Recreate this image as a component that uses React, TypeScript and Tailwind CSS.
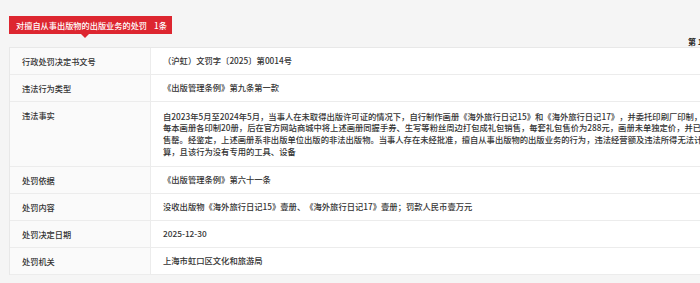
import React from "react";

const rows: { label: string; lines: string[] }[] = [
  { label: "行政处罚决定书文号", lines: ["（沪虹）文罚字〔2025〕第0014号"] },
  { label: "违法行为类型", lines: ["《出版管理条例》第九条第一款"] },
  {
    label: "违法事实",
    lines: [
      "自2023年5月至2024年5月，当事人在未取得出版许可证的情况下，自行制作画册《海外旅行日记15》和《海外旅行日记17》，并委托印刷厂印制，",
      "每本画册各印制20册，后在官方网站商城中将上述画册同握手券、生写等粉丝周边打包成礼包销售，每套礼包售价为288元，画册未单独定价，并已",
      "售罄。经鉴定，上述画册系非出版单位出版的非法出版物。当事人存在未经批准，擅自从事出版物的出版业务的行为，违法经营额及违法所得无法计",
      "算，且该行为没有专用的工具、设备",
    ],
  },
  { label: "处罚依据", lines: ["《出版管理条例》第六十一条"] },
  { label: "处罚内容", lines: ["没收出版物《海外旅行日记15》壹册、《海外旅行日记17》壹册；罚款人民币壹万元"] },
  { label: "处罚决定日期", lines: ["2025-12-30"] },
  { label: "处罚机关", lines: ["上海市虹口区文化和旅游局"] },
];

export default function App() {
  return (
    <div
      className="w-[700px] h-[283px] overflow-hidden bg-[#f5f5f5] text-[#333] font-medium [text-spacing-trim:space-all]"
      style={{ fontFamily: '"Noto Sans CJK SC", "Noto Sans", sans-serif' }}
    >
      <div className="w-[1000px] pl-[9px]">
        <div className="h-[47px] flex items-start">
          <div className="mt-[16px] relative">
            <div className="h-[18px] w-[163px] bg-[#dd2630] text-white text-[8.2px] leading-[18px] pl-[7px] whitespace-nowrap">
              对擅自从事出版物的出版业务的处罚<span className="ml-[7px]">1条</span>
            </div>
            <div className="absolute left-[72px] top-[18px] w-0 h-0 border-l-[4px] border-r-[4px] border-t-[4px] border-l-transparent border-r-transparent border-t-[#dd2630]" />
          </div>
          <div className="ml-[516px] mt-[37px] text-[8px] leading-[9px] font-bold whitespace-nowrap text-[#222]">第 1 页</div>
        </div>
        <div className="border-t border-l border-[#e8e8e8] bg-white">
          {rows.map((r) => (
            <div key={r.label} className="flex border-b border-[#ececec]">
              <div className="w-[141px] shrink-0 bg-[#fafafa] border-r border-[#ececec] pl-[12px] py-[7px] text-[8.2px] leading-[12px] whitespace-nowrap">
                {r.label}
              </div>
              <div className={`pl-[12px] text-[8.3px] leading-[11.7px] ${r.lines.length > 1 ? "py-[8.5px]" : "py-[7px]"}`}>
                {r.lines.map((l, i) => (
                  <div key={i} className="whitespace-nowrap">
                    {l}
                  </div>
                ))}
              </div>
            </div>
          ))}
        </div>
      </div>
    </div>
  );
}
